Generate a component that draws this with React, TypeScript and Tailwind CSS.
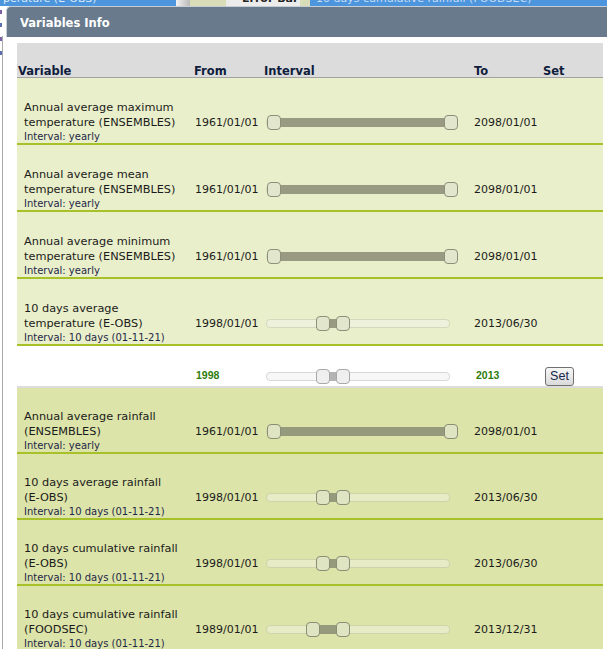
import React from 'react';

type Tone = 'light' | 'dark' | 'white';

interface VariableRow {
  lines: string[];
  interval: string;
  from: string;
  to: string;
  low: number;
  high: number;
  tone: Tone;
}

const upper: VariableRow[] = [
  { lines: ['Annual average maximum', 'temperature (ENSEMBLES)'], interval: 'yearly', from: '1961/01/01', to: '2098/01/01', low: 1, high: 178, tone: 'light' },
  { lines: ['Annual average mean', 'temperature (ENSEMBLES)'], interval: 'yearly', from: '1961/01/01', to: '2098/01/01', low: 1, high: 178, tone: 'light' },
  { lines: ['Annual average minimum', 'temperature (ENSEMBLES)'], interval: 'yearly', from: '1961/01/01', to: '2098/01/01', low: 1, high: 178, tone: 'light' },
  { lines: ['10 days average', 'temperature (E-OBS)'], interval: '10 days (01-11-21)', from: '1998/01/01', to: '2013/06/30', low: 50, high: 70, tone: 'light' },
];

const lower: VariableRow[] = [
  { lines: ['Annual average rainfall', '(ENSEMBLES)'], interval: 'yearly', from: '1961/01/01', to: '2098/01/01', low: 1, high: 178, tone: 'dark' },
  { lines: ['10 days average rainfall', '(E-OBS)'], interval: '10 days (01-11-21)', from: '1998/01/01', to: '2013/06/30', low: 50, high: 70, tone: 'dark' },
  { lines: ['10 days cumulative rainfall', '(E-OBS)'], interval: '10 days (01-11-21)', from: '1998/01/01', to: '2013/06/30', low: 50, high: 70, tone: 'dark' },
  { lines: ['10 days cumulative rainfall', '(FOODSEC)'], interval: '10 days (01-11-21)', from: '1989/01/01', to: '2013/12/31', low: 40, high: 70, tone: 'dark' },
];

const trackClass: Record<Tone, string> = {
  light: 'bg-[#eef2dc] border-[#d3d9bc]',
  dark: 'bg-[#e7ecc6] border-[#cdd4ab]',
  white: 'bg-[#f7f7f7] border-[#d8d8d8]',
};

const rangeClass: Record<Tone, string> = {
  light: 'bg-[#989b82]',
  dark: 'bg-[#969a7c]',
  white: 'bg-[#b4b4b4]',
};

const handleClass: Record<Tone, string> = {
  light: 'bg-[#e2e6cc] border-[#8d9079]',
  dark: 'bg-[#dfe4c2] border-[#8a8e74]',
  white: 'bg-[#efefef] border-[#a9a9a9]',
};

const Slider: React.FC<{ low: number; high: number; tone: Tone }> = ({ low, high, tone }) => (
  <div className="relative ml-[2px] h-[15px] w-[184px]">
    <div className={`absolute left-0 right-0 top-[3px] h-[9px] rounded-[4px] border ${trackClass[tone]}`} />
    <div
      className={`absolute top-[3px] h-[9px] ${rangeClass[tone]}`}
      style={{ left: low + 7, width: high - low }}
    />
    <div className={`absolute top-0 h-[15px] w-[14px] rounded-[4px] border ${handleClass[tone]}`} style={{ left: low }} />
    <div className={`absolute top-0 h-[15px] w-[14px] rounded-[4px] border ${handleClass[tone]}`} style={{ left: high }} />
  </div>
);

const Row: React.FC<{ row: VariableRow; top: string }> = ({ row, top }) => (
  <div
    className={`grid grid-cols-[177px_70px_210px_69px_60px] items-center border-b-2 border-[#a6c12a] ${top} ${
      row.tone === 'light' ? 'bg-[#e9efca]' : 'bg-[#dce4a9]'
    }`}
  >
    <div className="pl-[7px] text-[#1b1b1b]">
      <div className="text-[11.3px] leading-[15px]">
        {row.lines[0]}
        <br />
        {row.lines[1]}
      </div>
      <div className="text-[10px] leading-[13px] text-[#1c2748]">Interval: {row.interval}</div>
    </div>
    <div className="pl-[1px] pt-[3px] text-[11px] text-[#1b1b1b]">{row.from}</div>
    <div className="pt-[2px]">
      <Slider low={row.low} high={row.high} tone={row.tone} />
    </div>
    <div className="pt-[3px] text-[11px] text-[#1b1b1b]">{row.to}</div>
    <div />
  </div>
);

export default function App() {
  return (
    <div className="relative h-[649px] w-[607px] overflow-hidden bg-white font-['DejaVu_Sans',sans-serif]">
      {/* sliver of the page behind the dialog */}
      <div className="flex h-[6px] overflow-hidden text-[11px] leading-[12px]">
        <div className="w-[176px] bg-[#4d95dc] pl-[3px] text-[#dbe9f8]">
          <div className="-mt-[7px]">perature (E-OBS)</div>
        </div>
        <div className="w-[14px] bg-gradient-to-r from-[#f2f2f2] to-[#b9b9b9]" />
        <div className="w-[36px] bg-[#d9ddb8]" />
        <div className="flex w-[74px] gap-[4px] bg-[#ececec] pl-[16px] font-bold text-[#222]">
          <div className="-mt-[7px]">Error Bar</div>
        </div>
        <div className="w-[10px] bg-[#d9ddb8]" />
        <div className="flex-1 bg-[#4d95dc] pl-[6px] text-[#c9ddf4]">
          <div className="-mt-[7px] whitespace-nowrap">10 days cumulative rainfall (FOODSEC)</div>
        </div>
      </div>

      <div className="flex">
        <div className="relative w-[6px]">
          <div className="absolute left-[2px] top-[30px] h-[620px] w-px bg-[#a9a9a9]" />
          <div className="absolute left-0 top-[4px] h-[4px] w-[2px] bg-[#7b5ea8]" />
          <div className="absolute left-0 top-[17px] h-[4px] w-[2px] bg-[#5a6fb0]" />
          <div className="absolute left-0 top-[31px] h-[4px] w-[2px] bg-[#7b5ea8]" />
          <div className="absolute left-0 top-[45px] h-[4px] w-[2px] bg-[#5a6fb0]" />
        </div>

        <div className="flex-1">
          <div className="flex h-[31px] items-center rounded-tl-[5px] border-l border-t border-[#c7ced5] bg-[#687a8c] pl-[13px] pt-[3px] text-[11.5px] font-bold text-white">
            Variables Info
          </div>

          <div className="pl-[11px] pt-[6px]">
            <div className="w-[586px]">
              <div className="grid h-[35px] grid-cols-[177px_70px_210px_69px_60px] items-end border-b border-[#a3a3a3] bg-[#dcdcdc] text-[11.5px] font-bold leading-[11px] text-[#0f1c3c]">
                <div className="pl-[1px]">Variable</div>
                <div>From</div>
                <div>Interval</div>
                <div>To</div>
                <div>Set</div>
              </div>

              {upper.map((row) => (
                <Row key={row.lines.join()} row={row} top="pt-[22px]" />
              ))}

              <div className="grid h-[40px] grid-cols-[177px_70px_210px_69px_60px] items-center pt-[20px]">
                <div />
                <div className="pl-[2px] font-['Liberation_Sans',sans-serif] text-[10.5px] font-bold text-[#2e7d0c]">1998</div>
                <div>
                  <Slider low={50} high={70} tone="white" />
                </div>
                <div className="pl-[2px] font-['Liberation_Sans',sans-serif] text-[10.5px] font-bold text-[#2e7d0c]">2013</div>
                <div>
                  <button className="ml-[2px] flex h-[19px] w-[29px] items-center justify-center rounded-[3px] border border-[#707070] bg-gradient-to-b from-[#f7f7f7] to-[#dadada] font-['Liberation_Sans',sans-serif] text-[12.5px] text-[#15264a]">
                    Set
                  </button>
                </div>
              </div>

              <div className="h-[2px] bg-[#dcdcdc]" />

              {lower.map((row) => (
                <Row key={row.lines.join()} row={row} top="pt-[21px]" />
              ))}
            </div>
          </div>
        </div>
      </div>
    </div>
  );
}
